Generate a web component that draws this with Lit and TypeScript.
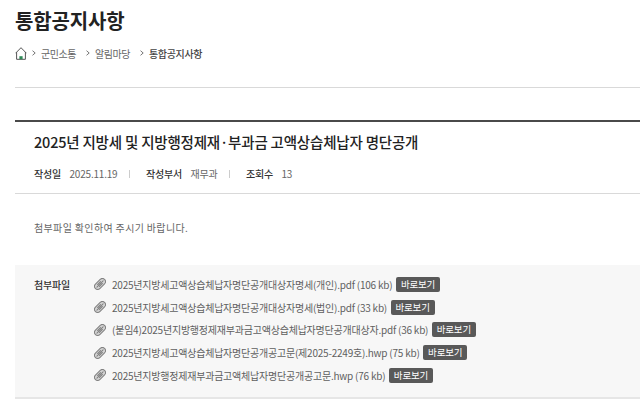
import { LitElement, html, css, svg } from "lit";
import { customElement } from "lit/decorators.js";

const clip = svg`<svg class="clip" viewBox="0 0 14 14" width="12" height="12" fill="#d4d4d4" stroke="#808080" stroke-width="1.2" stroke-linecap="round">
  <rect x="-0.5" y="3.4" width="15" height="7.2" rx="3.6" transform="rotate(-45 7 7)"/>
  <path fill="none" d="M4.2 7.6 L7.6 4.2 M6.4 9.8 L9.8 6.4 M3.4 10.6 L10.6 3.4"/>
</svg>`;

const sep = svg`<svg class="sep" viewBox="0 0 4 6" fill="none" stroke="#777"><path d="M0.5 0.7 L3.2 3 L0.5 5.3"/></svg>`;

const files = [
  "2025년지방세고액상습체납자명단공개대상자명세(개인).pdf (106 kb)",
  "2025년지방세고액상습체납자명단공개대상자명세(법인).pdf (33 kb)",
  "(붙임4)2025년지방행정제재부과금고액상습체납자명단공개대상자.pdf (36 kb)",
  "2025년지방세고액상습체납자명단공개공고문(제2025-2249호).hwp (75 kb)",
  "2025년지방행정제재부과금고액체납자명단공개공고문.hwp (76 kb)",
];

@customElement("app-root")
export class AppRoot extends LitElement {
  static styles = css`
    :host {
      display: block;
      width: 640px;
      height: 414px;
      overflow: hidden;
      background: #fff;
      font-family: "Noto Sans CJK KR", "Noto Sans", sans-serif;
      color: #666;
    }
    .page { padding-left: 15px; }
    h1 {
      margin: 0;
      height: 42px;
      font-size: 20px;
      line-height: 42px;
      font-weight: 700;
      color: #222;
      letter-spacing: -0.15px;
    }
    .crumbs {
      display: flex;
      align-items: center;
      height: 22px;
      margin-bottom: 23px;
      font-size: 10px;
      letter-spacing: -0.45px;
      color: #666;
    }
    .crumbs .home { width: 12px; height: 13px; margin-right: 5px; }
    .crumbs .sep { width: 4px; height: 6px; margin: 0 5px 0 0; flex: none; }
    .crumbs .item { margin-right: 10px; }
    .crumbs .current { color: #444; font-weight: 500; letter-spacing: -0.35px; }
    .rule { height: 1px; background: #d9d9d9; margin-bottom: 32px; }
    article { border-top: 2px solid #4a4a4a; }
    h2 {
      margin: 0;
      padding: 8px 0 0 19px;
      height: 23px;
      font-size: 14.5px;
      line-height: 24px;
      font-weight: 500;
      color: #222;
      letter-spacing: -0.2px;
    }
    .meta {
      display: flex;
      align-items: center;
      height: 40px;
      padding-left: 19px;
      font-size: 10px;
      letter-spacing: -0.2px;
      border-bottom: 1px solid #d9d9d9;
    }
    .meta b { font-weight: 500; color: #333; margin-right: 8.5px; }
    .meta .bar { width: 1px; height: 8px; background: #ccc; margin: 1px 15.5px 0 12px; }
    .body {
      margin: 0;
      padding: 26px 0 0 19px;
      height: 45px;
      font-size: 10px;
      line-height: 16px;
      color: #666;
      letter-spacing: 0.35px;
    }
    .attach {
      display: flex;
      height: 124px;
      background: #f7f7f7;
      border-bottom: 2px solid #e6e6e6;
      padding: 8px 0 0 19px;
    }
    .label {
      width: 59px;
      font-size: 10px;
      line-height: 23px;
      font-weight: 500;
      color: #333;
      letter-spacing: -0.2px;
    }
    ul { list-style: none; margin: 0; padding: 0; }
    li {
      display: flex;
      align-items: center;
      height: 22.75px;
      font-size: 10px;
      color: #5f5f5f;
      white-space: nowrap;
      letter-spacing: -0.22px;
    }
    .clip { margin: 0 6px 0 1px; flex: none; }
    .btn {
      margin-left: 3.5px;
      padding: 0 5px;
      height: 15px;
      line-height: 15px;
      background: #595959;
      color: #fff;
      font-size: 9.5px;
      border-radius: 2px;
      letter-spacing: -0.2px;
    }
  `;

  render() {
    return html`
      <div class="page">
        <h1>통합공지사항</h1>
        <div class="crumbs">
          <svg class="home" viewBox="0 0 12 13" fill="none" stroke="#555" stroke-width="1">
            <path d="M0.6 6.2 L6 0.7 L11.4 6.2 M1.6 5.2 V12.3 H10.4 V5.2"/>
            <rect x="4.4" y="9.2" width="3.2" height="3" fill="#2e8b57" stroke="none"/>
          </svg>
          ${sep}
          <span class="item">군민소통</span>
          ${sep}
          <span class="item">알림마당</span>
          ${sep}
          <span class="item current">통합공지사항</span>
        </div>
        <div class="rule"></div>
        <article>
          <h2>2025년 지방세 및 지방행정제재·부과금 고액상습체납자 명단공개</h2>
          <div class="meta">
            <b>작성일</b><span>2025.11.19</span><i class="bar"></i>
            <b>작성부서</b><span>재무과</span><i class="bar"></i>
            <b>조회수</b><span>13</span>
          </div>
          <p class="body">첨부파일 확인하여 주시기 바랍니다.</p>
          <section class="attach">
            <div class="label">첨부파일</div>
            <ul>
              ${files.map((f) => html`<li>${clip}<span>${f}</span><span class="btn">바로보기</span></li>`)}
            </ul>
          </section>
        </article>
      </div>
    `;
  }
}
